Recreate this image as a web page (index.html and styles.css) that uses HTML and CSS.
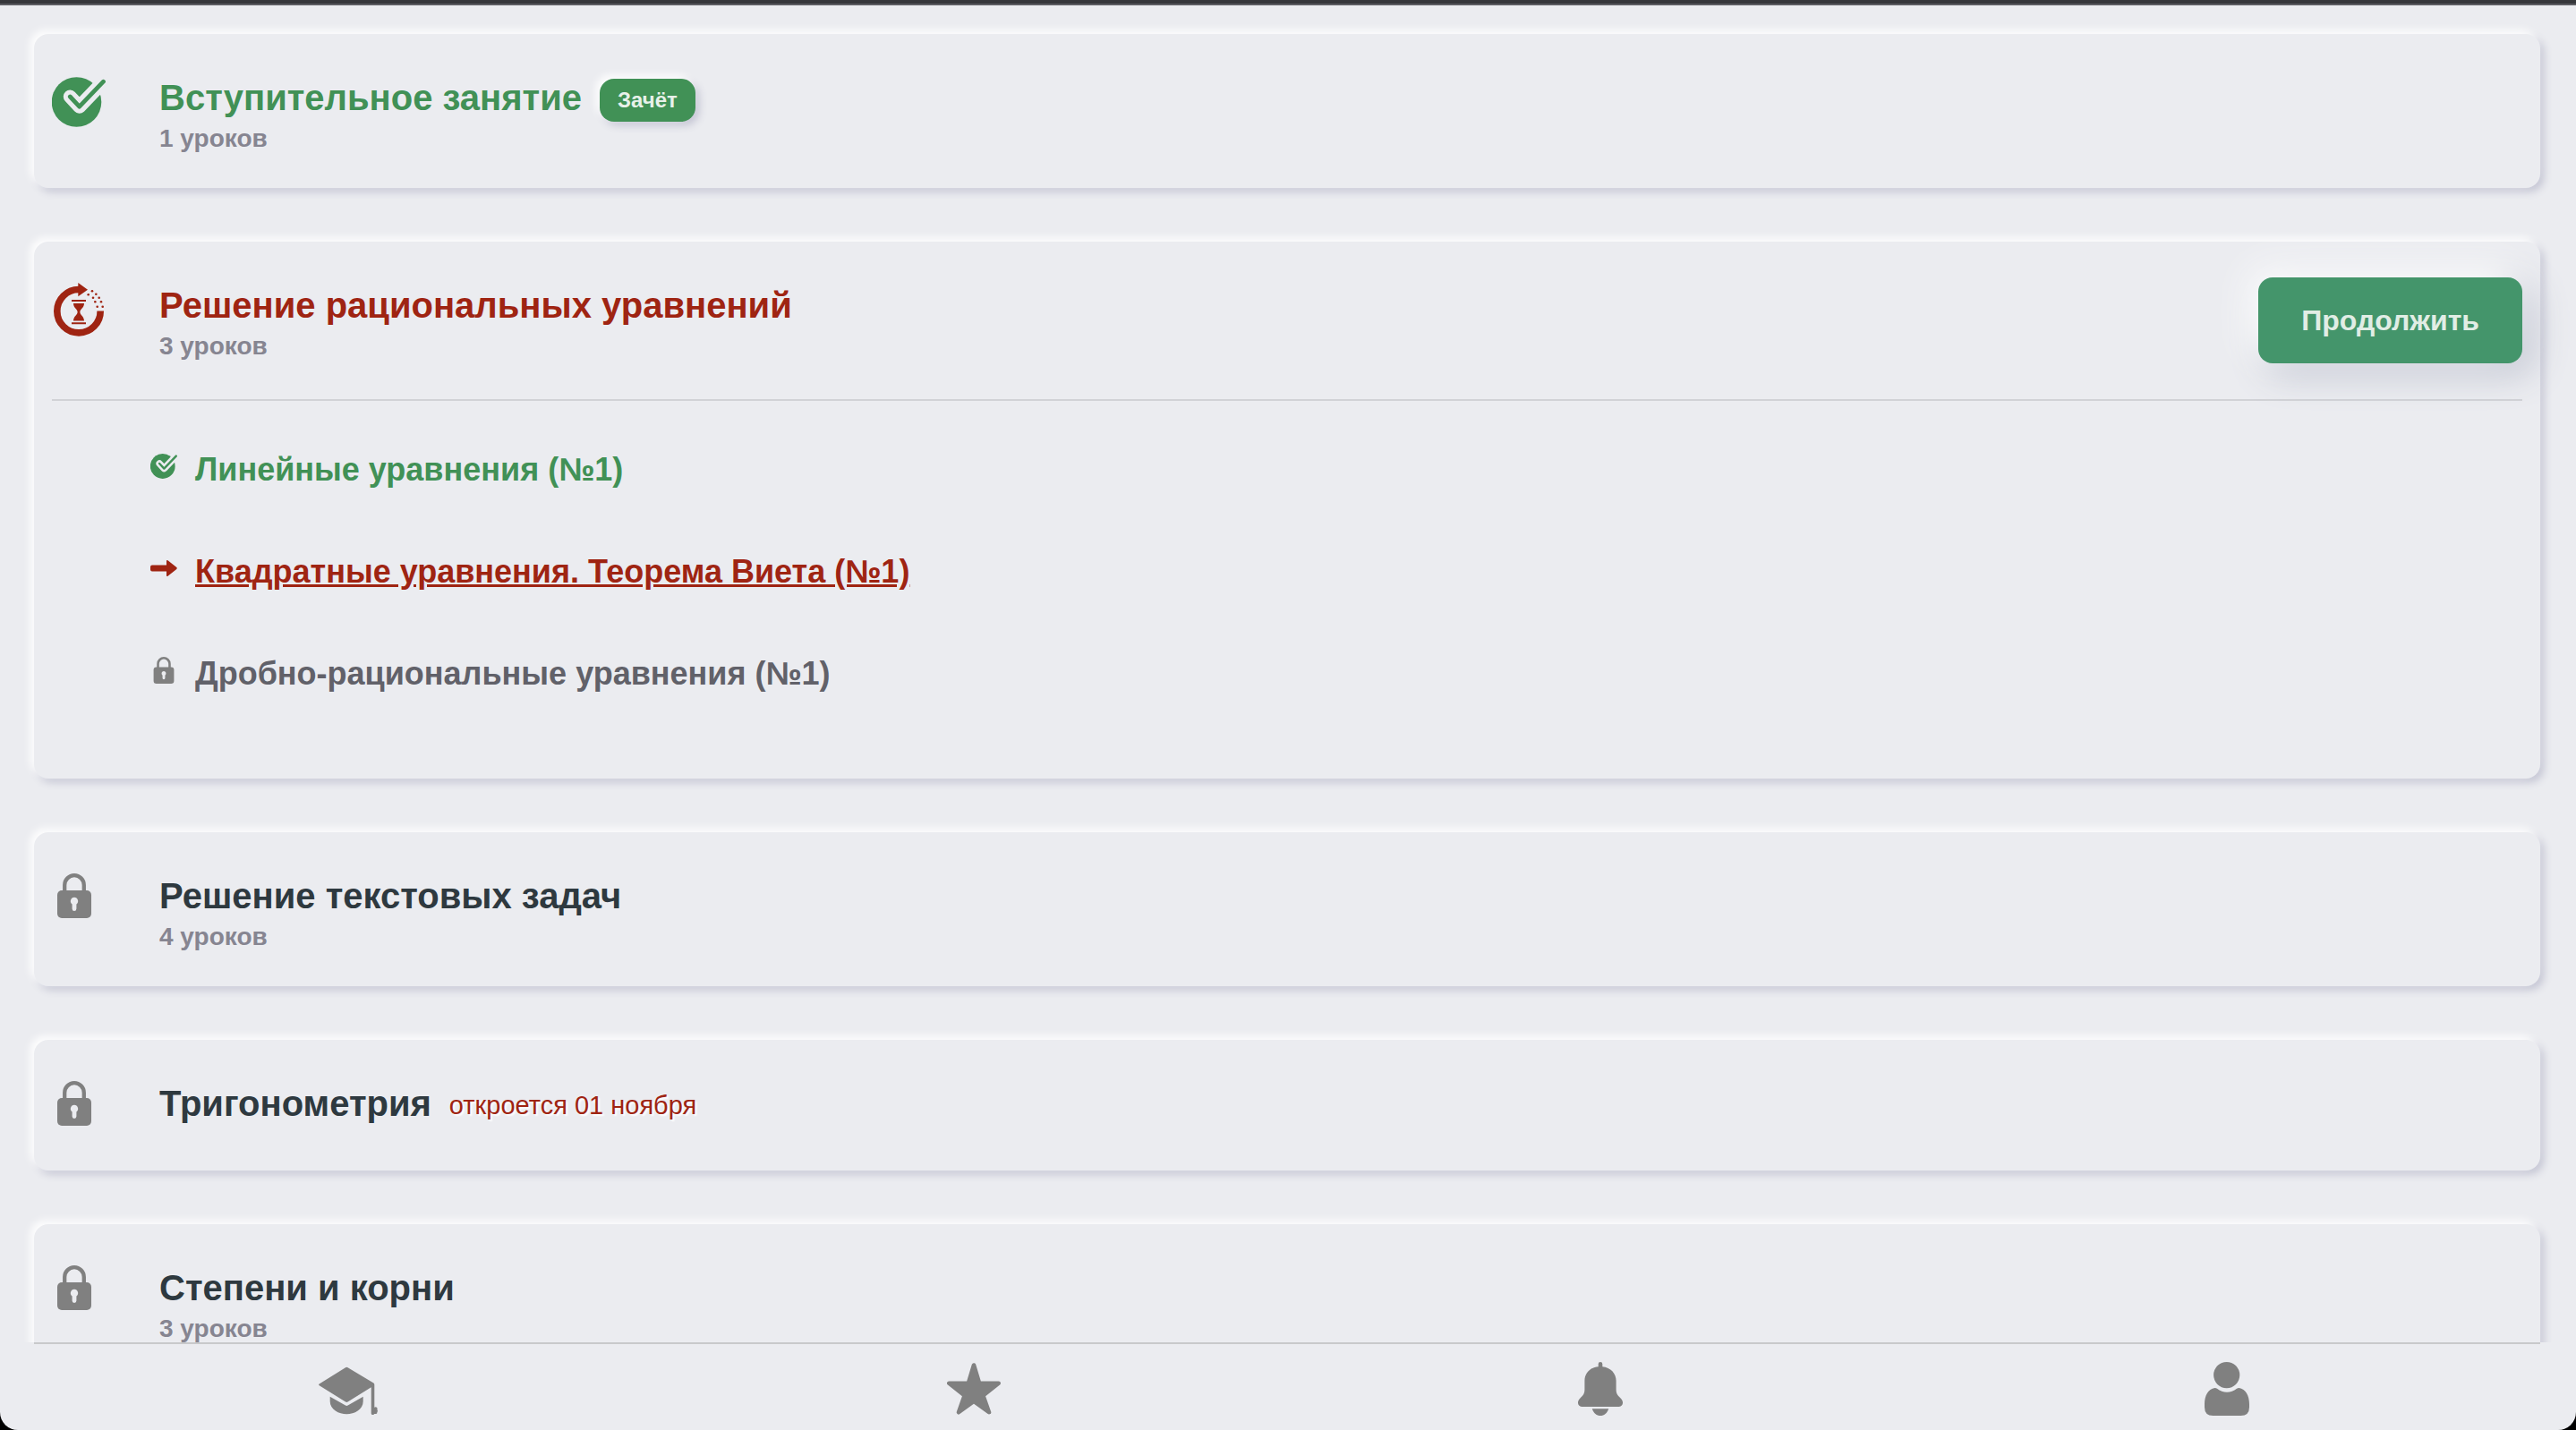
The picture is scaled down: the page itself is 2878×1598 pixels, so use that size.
FILE: index.html
```html
<!DOCTYPE html>
<html lang="ru">
<head>
<meta charset="utf-8">
<meta name="viewport" content="width=device-width, initial-scale=1">
<title>Уроки</title>
<link rel="stylesheet" href="styles.css">
</head>
<body>
<svg class="sprite" aria-hidden="true">
  <symbol id="i-done" viewBox="0 0 60 60">
    <circle cx="27.5" cy="30" r="27.8" fill="currentColor"/>
    <path d="M20.3 24L30.7 35.2L57.5 7.2" class="halo"/>
    <path d="M20.3 24L30.7 35.2L57.5 7.2" class="tick"/>
  </symbol>
  <symbol id="i-progress" viewBox="0 0 60 60">
    <path d="M54.2 31.5A24.2 24.2 0 1 1 30 7.5" fill="none" stroke="currentColor" stroke-width="7.6"/>
    <g fill="currentColor">
      <path d="M29.3 0L40 7.7L29.3 15.2z"/>
      <path d="M22 19h16v2H22zM22 44.3h16v2H22z"/>
      <path d="M24 23h12c0 5-4.600 6.500-4.600 9.700S36 37.500 36 42.600H24c0-5.100 4.600-6.700 4.600-9.900S24 28 24 23z"/>
      <circle cx="40.700" cy="13.300" r="1.300"/><circle cx="45" cy="9.300" r="1.300"/>
      <circle cx="49.300" cy="12.700" r="1.300"/><circle cx="46" cy="16.700" r="1.300"/>
      <circle cx="52.700" cy="16.700" r="1.300"/><circle cx="48.300" cy="21.300" r="1.300"/>
      <circle cx="55" cy="21.300" r="1.300"/><circle cx="50.700" cy="26.700" r="1.300"/>
      <circle cx="56.700" cy="26.700" r="1.300"/>
    </g>
  </symbol>
  <symbol id="i-lock" viewBox="0 0 50 50">
    <path d="M14.200 20V13a10.800 10.800 0 0 1 21.600 0V20" fill="none" stroke="currentColor" stroke-width="4.300"/>
    <rect x="6" y="19" width="38" height="31" rx="5" fill="currentColor"/>
    <path d="M25 26.800a4.200 4.200 0 0 1 2.400 7.600v5.200a2.400 2.400 0 0 1-4.800 0v-5.200A4.200 4.200 0 0 1 25 26.800z" class="hole"/>
  </symbol>
  <symbol id="i-arrow" viewBox="0 0 30 30">
    <path d="M2 11.500h16V7q0-1.500 1.500-.7l9.500 7.500q1.500 1.200 0 2.400l-9.500 7.500q-1.500.8-1.500-.7v-4.500H2q-2 0-2-2v-3q0-2 2-2z" fill="currentColor"/>
  </symbol>
  <symbol id="i-cap" viewBox="-4 0 68 60">
    <g fill="currentColor">
      <path d="M28 6.200q1.300-.9 2.600 0L59.400 23.600q.9.600.9 1.600V50.700q1-.7 2.200-.3 1.700.8.800 2.600 1.200 1.700 0 3.200.3 1.800-1.500 1.800l-1.500-.1q-.3 1.100-1.800 1.100-1.800 0-1.800-1.500V28.300L30.600 44.600q-1.300.9-2.600 0L-1.300 26.200q-1.300-.9 0-1.800z"/>
      <path d="M10.700 38.700L28 48.500q1.300.8 2.600 0L47.700 38.700V44C47.700 53 38 58.300 29.300 58.300S10.700 53 10.700 44z"/>
    </g>
  </symbol>
  <symbol id="i-star" viewBox="0 0 60 60">
    <path d="M30 3.500L36.200 23.800H57.700L40.400 37.500L47 56.200L30 44L13 56.200L19.600 37.500L2.300 23.800H23.800z" fill="currentColor" stroke="currentColor" stroke-width="4.600" stroke-linejoin="round"/>
  </symbol>
  <symbol id="i-bell" viewBox="0 0 60 60">
    <g fill="currentColor">
      <path d="M27.700 5.200V2.300a2.300 2.300 0 0 1 4.600 0V5.200C41.500 6 47.600 12.800 47.600 21v9.500c0 5 1.700 6.800 5 10 4.200 4 2.500 9.400-1.700 9.400H9.100c-4.200 0-5.900-5.400-1.700-9.400 3.300-3.200 5-5 5-10V21C12.400 12.800 18.500 6 27.700 5.200z"/>
      <path d="M20.800 52.200h18.400C37.700 57.300 34 60 30 60s-7.700-2.700-9.200-7.800z"/>
    </g>
  </symbol>
  <symbol id="i-user" viewBox="0 0 60 60">
    <g fill="currentColor">
      <circle cx="29.700" cy="14.600" r="14.600"/>
      <path d="M16.500 29q1.500 0 2.500.7 5 4 11 4t11-4q1-.7 2.500-.7C51 30 55 38 55 47v3.500Q55 60 45.500 60h-31Q5 60 5 50.500V47C5 38 9 30 16.500 29z"/>
    </g>
  </symbol>
</svg>

<div class="app">
  <main class="modules">
    <section class="card">
      <header class="card-head">
        <svg class="icon done"><use href="#i-done"/></svg>
        <div class="card-text">
          <div class="title-row">
            <h2 class="title done">Вступительное занятие</h2>
            <span class="badge">Зачёт</span>
          </div>
          <p class="count">1 уроков</p>
        </div>
      </header>
    </section>

    <section class="card">
      <header class="card-head">
        <svg class="icon current"><use href="#i-progress"/></svg>
        <div class="card-text">
          <div class="title-row"><h2 class="title current">Решение рациональных уравнений</h2></div>
          <p class="count">3 уроков</p>
        </div>
        <button class="continue" type="button">Продолжить</button>
      </header>
      <ul class="lessons">
        <li class="lesson done"><svg class="lesson-icon"><use href="#i-done"/></svg><a href="#lesson-1">Линейные уравнения (№1)</a></li>
        <li class="lesson current"><svg class="lesson-icon"><use href="#i-arrow"/></svg><a class="active" href="#lesson-2">Квадратные уравнения. Теорема Виета (№1)</a></li>
        <li class="lesson locked"><svg class="lesson-icon lock"><use href="#i-lock"/></svg><span>Дробно-рациональные уравнения (№1)</span></li>
      </ul>
    </section>

    <section class="card">
      <header class="card-head">
        <svg class="icon lock"><use href="#i-lock"/></svg>
        <div class="card-text">
          <div class="title-row"><h2 class="title">Решение текстовых задач</h2></div>
          <p class="count">4 уроков</p>
        </div>
      </header>
    </section>

    <section class="card">
      <header class="card-head">
        <svg class="icon lock"><use href="#i-lock"/></svg>
        <div class="card-text">
          <div class="title-row">
            <h2 class="title">Тригонометрия</h2>
            <span class="opens">откроется 01 ноября</span>
          </div>
        </div>
      </header>
    </section>

    <section class="card">
      <header class="card-head">
        <svg class="icon lock"><use href="#i-lock"/></svg>
        <div class="card-text">
          <div class="title-row"><h2 class="title">Степени и корни</h2></div>
          <p class="count">3 уроков</p>
        </div>
      </header>
    </section>
  </main>

  <nav class="tabs">
    <a href="#courses" aria-label="Курсы"><svg class="tab-icon wide"><use href="#i-cap"/></svg></a>
    <a href="#rating" aria-label="Рейтинг"><svg class="tab-icon"><use href="#i-star"/></svg></a>
    <a href="#news" aria-label="Уведомления"><svg class="tab-icon"><use href="#i-bell"/></svg></a>
    <a href="#profile" aria-label="Профиль"><svg class="tab-icon"><use href="#i-user"/></svg></a>
  </nav>
</div>
</body>
</html>
```
FILE: styles.css
```css
:root {
  --bg: #ebecf0;
  --green: #419156;
  --red: #9f2412;
  --gray: #808080;
  --raised: -4px -4px 10px #fff, 4px 4px 10px #c2c3d2;
}

* {
  box-sizing: border-box;
}

body {
  margin: 0;
  background: #000;
  font-family: "Liberation Sans", Arial, sans-serif;
  font-weight: 700;
  color: #2e393f;
}

h2,
p,
ul {
  margin: 0;
  padding: 0;
}

a {
  color: inherit;
  text-decoration: none;
}

.sprite {
  position: absolute;
  width: 0;
  height: 0;
}

.halo,
.tick {
  fill: none;
  stroke-linecap: round;
  stroke-linejoin: round;
}

.halo {
  stroke: var(--bg);
  stroke-width: 15;
}

.tick {
  stroke: currentColor;
  stroke-width: 4.8;
}

.hole {
  fill: var(--bg);
}

.done {
  color: var(--green);
}

.current {
  color: var(--red);
}

.app {
  display: flex;
  flex-direction: column;
  height: 100vh;
  border-top: 4px solid #36373b;
  border-radius: 0 0 20px 20px;
  background: var(--bg);
  overflow: hidden;
}

.modules {
  flex: 1;
  min-height: 0;
  padding: 32px 40px 32px 38px;
  border-top: 2px solid #5b5b61;
  overflow-y: auto;
  scrollbar-width: none;
}

.card {
  padding: 0 20px;
  border-radius: 16px;
  background: var(--bg);
  box-shadow: var(--raised);
}

.card + .card {
  margin-top: 60px;
}

.card-head {
  display: flex;
  align-items: flex-start;
  gap: 60px;
  min-height: 146px;
  padding: 44px 0 36px;
}

.icon {
  flex: none;
  width: 60px;
  height: 60px;
  margin-top: 2px;
}

.lock {
  color: var(--gray);
}

.icon.lock {
  width: 50px;
  height: 50px;
  margin-right: 10px;
}

.card-text {
  flex: 1;
}

.title-row {
  display: flex;
  align-items: flex-end;
  gap: 20px;
}

.title {
  font-size: 40px;
  line-height: 54px;
}

.count {
  color: #868591;
  font-size: 28px;
  line-height: 38px;
}

.badge {
  padding: 0 20px;
  border-radius: 16px;
  background: var(--green);
  box-shadow: var(--raised);
  color: #e8f1ea;
  font-size: 24px;
  line-height: 48px;
}

.opens {
  color: var(--red);
  font-size: 29px;
  font-weight: 400;
  line-height: 50px;
  text-shadow: 2px 2px 2px #fff;
}

.continue {
  height: 96px;
  margin: -4px 0 0;
  padding: 0 48px;
  border: 0;
  border-radius: 16px;
  background: #44956b;
  box-shadow: -10px -10px 40px #fff, 10px 10px 40px #babecc;
  color: #e1ede5;
  font: inherit;
  font-size: 32px;
}

.lessons {
  padding: 20px 0 60px 110px;
  border-top: 2px solid #d1d2d6;
  list-style: none;
}

.card-head:has(.continue) {
  padding-bottom: 40px;
}

.lesson {
  display: flex;
  align-items: center;
  gap: 20px;
  font-size: 36px;
  line-height: 114px;
}

.lesson-icon {
  flex: none;
  width: 30px;
  height: 30px;
  margin-bottom: 8px;
}

.locked {
  color: #616169;
}

.active {
  text-decoration: underline;
}

.tabs {
  display: grid;
  grid-template-columns: repeat(4, 1fr);
  margin: 0 40px 0 38px;
  padding: 20px 0 16px;
  border-top: 2px solid #c8c9cb;
  color: var(--gray);
}

.tabs a {
  display: flex;
  justify-content: center;
}

.tab-icon {
  width: 60px;
  height: 60px;
}

.tab-icon.wide {
  width: 68px;
}
```
